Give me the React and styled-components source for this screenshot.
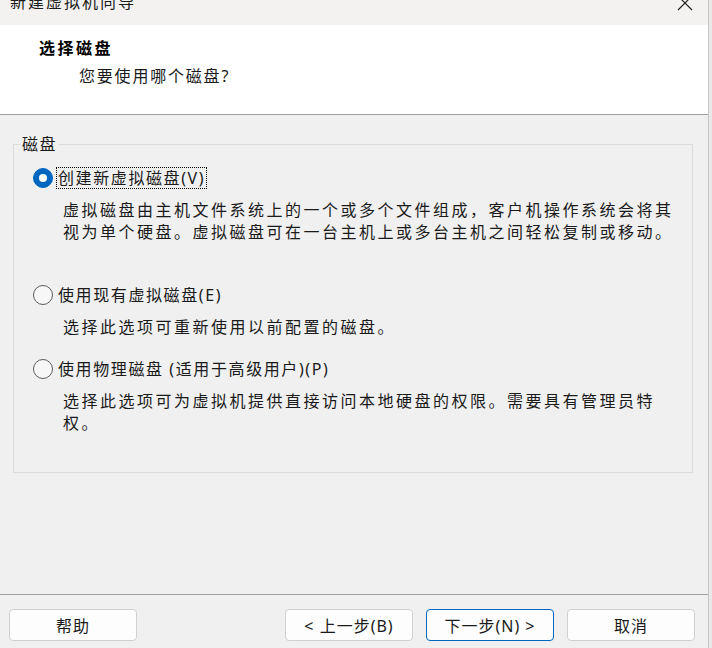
import styled, { createGlobalStyle } from "styled-components";

const GlobalStyle = createGlobalStyle`
  html, body {
    margin: 0;
    padding: 0;
    background: #e9e9e9;
  }
  body {
    font-family: "Noto Sans", "Noto Sans CJK SC", sans-serif;
    color: #1a1a1a;
  }
`;

const Frame = styled.div`
  display: flex;
  width: 712px;
  height: 648px;
  overflow: hidden;
`;

const Window = styled.div`
  box-sizing: border-box;
  width: 709px;
  height: 648px;
  display: flex;
  flex-direction: column;
  background: #f0f0f0;
  border-right: 1px solid #c6c6c6;
`;

const TitleBar = styled.div`
  height: 25px;
  flex-shrink: 0;
  display: flex;
  justify-content: space-between;
  align-items: flex-start;
  padding: 0 15px 0 10px;
  background: #f3f2f1;
  overflow: hidden;
`;

const TitleText = styled.div`
  margin-top: -9px;
  font-size: 16px;
  line-height: 22px;
  letter-spacing: 2px;
  color: #1a1a1a;
`;

const CloseIcon = styled.svg`
  margin-top: -5px;
  width: 16px;
  height: 16px;
`;

const Header = styled.div`
  flex-shrink: 0;
  height: 90px;
  box-sizing: border-box;
  padding: 12px 0 0 39px;
  background: #ffffff;
  border-bottom: 1px solid #a0a0a0;
`;

const HeaderTitle = styled.div`
  font-size: 16px;
  line-height: 22px;
  font-weight: 700;
  letter-spacing: 2.5px;
  color: #000;
`;

const HeaderSub = styled.div`
  margin: 6px 0 0 40px;
  font-size: 16px;
  line-height: 22px;
  letter-spacing: 1.8px;
  color: #1a1a1a;
`;

const Body = styled.div`
  flex: 1;
  padding: 18px 15px 0 13px;
`;

const Group = styled.fieldset`
  box-sizing: border-box;
  height: 340px;
  margin: 0;
  padding: 0;
  border: 1px solid #dcdcdc;
`;

const GroupLabel = styled.legend`
  margin-left: 6px;
  padding: 0 2px;
  font-size: 16px;
  line-height: 22px;
  letter-spacing: 1.5px;
`;

const Options = styled.div`
  padding: 12px 0 0 19px;
`;

const OptionRow = styled.div`
  display: flex;
  align-items: center;
  height: 22px;
  margin-top: ${(p) => p.$gap || 0}px;
`;

const Radio = styled.span`
  box-sizing: border-box;
  width: 20px;
  height: 20px;
  border-radius: 50%;
  flex-shrink: 0;
  display: flex;
  align-items: center;
  justify-content: center;
  background: ${(p) => (p.$checked ? "#0067c0" : "#f7f7f7")};
  border: 1px solid ${(p) => (p.$checked ? "#0067c0" : "#5c5c5c")};

  &::after {
    content: "";
    display: ${(p) => (p.$checked ? "block" : "none")};
    width: 8px;
    height: 8px;
    border-radius: 50%;
    background: #ffffff;
  }
`;

const OptionLabel = styled.span`
  margin-left: 4px;
  padding: 0 1px;
  font-size: 16px;
  line-height: 20px;
  letter-spacing: 1.6px;
  outline: ${(p) => (p.$focused ? "1px dotted #000" : "none")};
`;

const Desc = styled.div`
  margin: 10px 0 0 30px;
  font-size: 16px;
  line-height: 22px;
  letter-spacing: 2.5px;
  white-space: nowrap;
`;

const Footer = styled.div`
  flex-shrink: 0;
  display: flex;
  gap: 13px;
  padding: 14px 13px 7px 9px;
  border-top: 1px solid #a0a0a0;
`;

const Button = styled.button`
  box-sizing: border-box;
  width: 128px;
  height: 32px;
  margin-left: ${(p) => (p.$push ? "auto" : "0")};
  padding: 0;
  background: #fdfdfd;
  border: 1px solid ${(p) => (p.$primary ? "#0067c0" : "#d0d0d0")};
  border-radius: 4px;
  font-family: "Noto Sans", "Noto Sans CJK SC", sans-serif;
  font-size: 16px;
  letter-spacing: 1px;
  color: #1a1a1a;
`;

const options = [
  {
    label: "创建新虚拟磁盘(V)",
    checked: true,
    gap: 0,
    lines: [
      "虚拟磁盘由主机文件系统上的一个或多个文件组成，客户机操作系统会将其",
      "视为单个硬盘。虚拟磁盘可在一台主机上或多台主机之间轻松复制或移动。",
    ],
  },
  {
    label: "使用现有虚拟磁盘(E)",
    gap: 41,
    lines: ["选择此选项可重新使用以前配置的磁盘。"],
  },
  {
    label: "使用物理磁盘 (适用于高级用户)(P)",
    gap: 20,
    lines: [
      "选择此选项可为虚拟机提供直接访问本地硬盘的权限。需要具有管理员特",
      "权。",
    ],
  },
];

const App = () => {
  return (
    <Frame>
      <GlobalStyle />
      <Window>
        <TitleBar>
          <TitleText>新建虚拟机向导</TitleText>
          <CloseIcon viewBox="0 0 16 16">
            <path d="M1 1 L15 15 M15 1 L1 15" stroke="#1a1a1a" strokeWidth="1.1" fill="none" />
          </CloseIcon>
        </TitleBar>
        <Header>
          <HeaderTitle>选择磁盘</HeaderTitle>
          <HeaderSub>您要使用哪个磁盘?</HeaderSub>
        </Header>
        <Body>
          <Group>
            <GroupLabel>磁盘</GroupLabel>
            <Options>
              {options.map((o) => (
                <div key={o.label}>
                  <OptionRow $gap={o.gap}>
                    <Radio $checked={o.checked} />
                    <OptionLabel $focused={o.checked}>{o.label}</OptionLabel>
                  </OptionRow>
                  <Desc>
                    {o.lines.map((l, i) => (
                      <div key={i}>{l}</div>
                    ))}
                  </Desc>
                </div>
              ))}
            </Options>
          </Group>
        </Body>
        <Footer>
          <Button>帮助</Button>
          <Button $push>&lt; 上一步(B)</Button>
          <Button $primary>下一步(N) &gt;</Button>
          <Button>取消</Button>
        </Footer>
      </Window>
    </Frame>
  );
};

export default App;
